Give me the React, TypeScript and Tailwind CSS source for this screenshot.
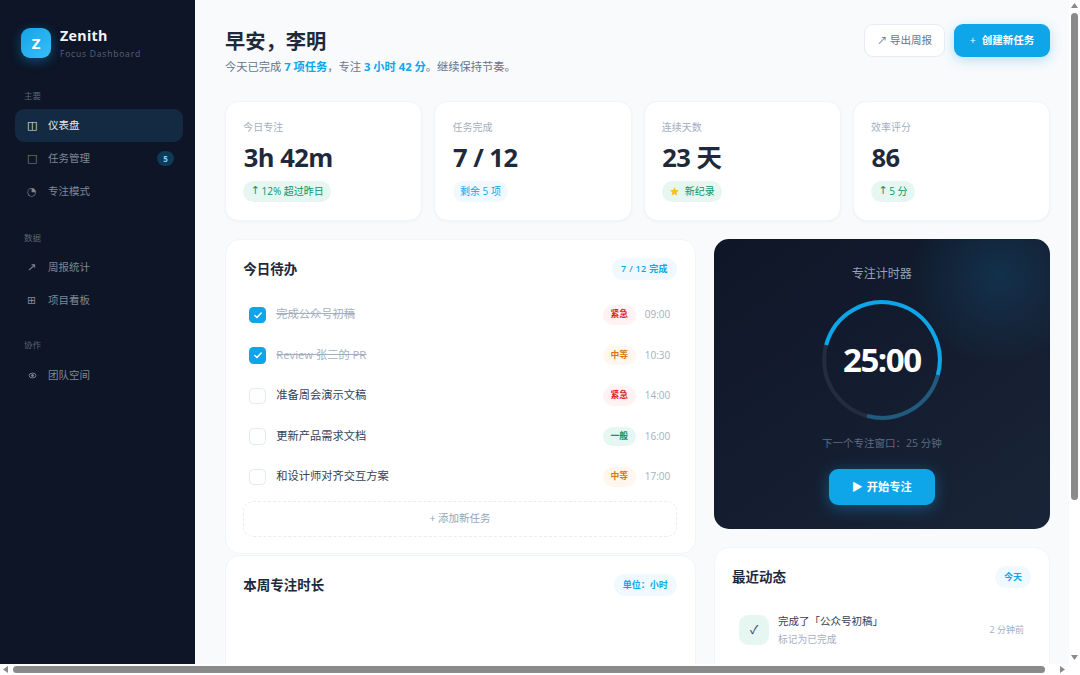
const stats = [
  { label: '今日专注', value: '3h 42m', chip: '12% 超过昨日', kind: 'up' },
  { label: '任务完成', value: '7 / 12', chip: '剩余 5 项', kind: 'info' },
  { label: '连续天数', value: '23 天', chip: '新纪录', kind: 'star' },
  { label: '效率评分', value: '86', chip: '5 分', kind: 'up' },
];

const tasks = [
  { title: '完成公众号初稿', level: '紧急', time: '09:00', done: true },
  { title: 'Review 张三的 PR', level: '中等', time: '10:30', done: true },
  { title: '准备周会演示文稿', level: '紧急', time: '14:00', done: false },
  { title: '更新产品需求文档', level: '一般', time: '16:00', done: false },
  { title: '和设计师对齐交互方案', level: '中等', time: '17:00', done: false },
];

const levelClass: Record<string, string> = {
  紧急: 'bg-[#fef2f2] text-[#dc2626]',
  中等: 'bg-[#fff7ed] text-[#d97706]',
  一般: 'bg-[#e6f7f1] text-[#059669]',
};

const dejavu = { fontFamily: '"DejaVu Sans", sans-serif' };

function SectionLabel({ children, className = '' }: { children: string; className?: string }) {
  return <div className={`px-[9px] text-[8.5px] leading-[12px] text-[#5b6474] ${className}`}>{children}</div>;
}

function NavItem({ icon, label, active, badge }: { icon: React.ReactNode; label: string; active?: boolean; badge?: string }) {
  return (
    <div className={`flex h-[33px] items-center rounded-[9px] pl-[12px] pr-[9px] text-[10.5px] ${active ? 'bg-[#132a42] text-[#e2e8f0]' : 'text-[#7f8896]'}`}>
      <span className="w-[21px] shrink-0 text-[11px] leading-none" style={dejavu}>{icon}</span>
      <span className="flex-1">{label}</span>
      {badge && (
        <span className="flex h-[15px] w-[17px] items-center justify-center rounded-full bg-[#0f3a57] text-[8px] font-bold text-[#7dd3fc]">{badge}</span>
      )}
    </div>
  );
}

function Sidebar() {
  return (
    <aside className="h-[664px] w-[195px] shrink-0 bg-[#0d1526] pl-[15px] pr-[12px]">
      <div className="flex items-center gap-[9px] px-[6px] pt-[27px]">
        <div className="flex h-[30px] w-[30px] items-center justify-center rounded-[9px] bg-gradient-to-br from-[#0ea5e9] to-[#38bdf8] text-[15px] font-bold text-white shadow-[0_3px_12px_rgba(14,165,233,0.4)]">Z</div>
        <div>
          <div className="text-[14.25px] font-bold leading-[17px] tracking-[0.3px] text-[#f1f5f9]">Zenith</div>
          <div className="mt-[5px] text-[8.5px] leading-[10px] tracking-[0.8px] text-[#5b6474]">Focus Dashboard</div>
        </div>
      </div>
      <SectionLabel className="mt-[31px] mb-[7px]">主要</SectionLabel>
      <NavItem active label="仪表盘" icon="◫" />
      <NavItem label="任务管理" badge="5" icon="□" />
      <NavItem label="专注模式" icon="◔" />
      <SectionLabel className="mt-[24px] mb-[7px]">数据</SectionLabel>
      <NavItem label="周报统计" icon="↗" />
      <NavItem label="项目看板" icon="⊞" />
      <SectionLabel className="mt-[22px] mb-[8px]">协作</SectionLabel>
      <NavItem
        label="团队空间"
        icon={
          <svg width="9" height="7" viewBox="0 0 9 7" fill="none" stroke="#7f8896" strokeWidth="0.9" className="ml-[0.5px]">
            <ellipse cx="4.5" cy="3.5" rx="3.4" ry="2.4" />
            <circle cx="4.5" cy="3.5" r="1" fill="#7f8896" />
          </svg>
        }
      />
    </aside>
  );
}

function StatCard({ label, value, chip, kind }: { label: string; value: string; chip: string; kind: string }) {
  const chipClass = kind === 'info' ? 'bg-[#f0f9ff] text-[#0ea5e9]' : 'bg-[#e6f7f1] text-[#059669]';
  return (
    <div className="h-[120px] rounded-[13.5px] border border-[#f1f5f9] bg-white px-[17.25px] pt-[18px] shadow-[0_1px_3px_rgba(15,23,42,0.04)]">
      <div className="text-[10px] leading-[14px] text-[#a3afc0]">{label}</div>
      <div className="mt-[6px] pl-[0.5px] text-[25.5px] font-bold leading-[34px] tracking-[-0.5px] text-[#1e293b]">{value}</div>
      <div className={`mt-[6.5px] inline-flex h-[21px] items-center gap-[1.5px] rounded-full px-[7.5px] text-[10px] ${chipClass}`}>
        {kind === 'up' && <span className="text-[11px]" style={dejavu}>↑</span>}
        {kind === 'star' && (
          <svg width="11" height="11" viewBox="0 0 24 24" fill="#fbbf24" className="mr-[3px]">
            <path d="M12 2.5l2.9 6.2 6.8.8-5 4.6 1.3 6.7-6-3.4-6 3.4 1.3-6.7-5-4.6 6.8-.8z" />
          </svg>
        )}
        {chip}
      </div>
    </div>
  );
}

function CardHead({ title, badge, wide }: { title: string; badge: string; wide?: boolean }) {
  return (
    <div className="flex h-[22px] items-center justify-between">
      <h2 className="text-[13.5px] font-bold text-[#1e293b]">{title}</h2>
      <span className={`flex h-[22px] items-center rounded-full bg-[#f0f9ff] px-[9px] text-[9px] font-semibold text-[#0ea5e9] ${wide ? 'tracking-[0.3px]' : ''}`}>{badge}</span>
    </div>
  );
}

function TaskRow({ title, level, time, done }: { title: string; level: string; time: string; done: boolean }) {
  return (
    <div className="flex h-[40.5px] items-center px-[6px]">
      <span className={`flex h-[16.5px] w-[16.5px] shrink-0 items-center justify-center rounded-[4.5px] ${done ? 'bg-[#0ea5e9]' : 'border border-[#e2e8f0] bg-white'}`}>
        {done && (
          <svg width="10" height="10" viewBox="0 0 10 10" fill="none" stroke="white" strokeWidth="1.4" strokeLinecap="round" strokeLinejoin="round">
            <path d="M1.8 5.4 4 7.4 8.2 2.9" />
          </svg>
        )}
      </span>
      <span className={`ml-[10.5px] flex-1 text-[11.25px] ${done ? 'text-[#a3afc0] line-through' : 'text-[#334155]'}`}>{title}</span>
      <span className={`flex h-[19.5px] w-[33px] items-center justify-center rounded-full text-[8.75px] font-semibold ${levelClass[level]}`}>{level}</span>
      <span className="ml-[9px] w-[26px] text-[10px] text-[#a3afc0]">{time}</span>
    </div>
  );
}

function TimerCard() {
  return (
    <div className="relative flex h-[290px] flex-col items-center overflow-hidden rounded-[15px] bg-[linear-gradient(145deg,#0e1627,#1a2438)] pt-[26px]">
      <div className="absolute right-[-38px] top-[-54px] h-[180px] w-[180px] rounded-full bg-[radial-gradient(circle,rgba(14,165,233,0.15)_0%,rgba(14,165,233,0)_70%)]" />
      <div className="text-[12px] leading-[18px] text-[#94a3b8]">专注计时器</div>
      <div className="relative mt-[17px] flex h-[120px] w-[120px] items-center justify-center">
        <svg width="120" height="120" viewBox="0 0 120 120" fill="none" strokeWidth="4" className="absolute left-0 top-0">
          <circle cx="60" cy="60" r="57.8" stroke="#232d40" />
          <circle cx="60" cy="60" r="57.8" stroke="#215a7f" pathLength={360} strokeDasharray="90 270" transform="rotate(15 60 60)" />
          <circle cx="60" cy="60" r="57.8" stroke="#0ea5e9" pathLength={360} strokeDasharray="180 180" transform="rotate(-165 60 60)" />
        </svg>
        <span className="relative text-[33px] font-bold tracking-[-1.4px] text-white">25:00</span>
      </div>
      <div className="mt-[15px] text-[10.5px] leading-[16px] text-[#5f6b80]">下一个专注窗口：25 分钟</div>
      <button className="mt-[18px] flex h-[36px] w-[106px] items-center justify-center gap-[4px] rounded-[9px] bg-[#0ea5e9] text-[11.25px] font-semibold text-white shadow-[0_3px_15px_rgba(14,165,233,0.4)]">
        <span className="text-[11px]">▶</span> 开始专注
      </button>
    </div>
  );
}

// the page's own scrollbars, which the screenshot shows but the headless browser hides
function Scrollbars() {
  return (
    <>
      <div className="absolute bottom-0 right-0 top-0 w-[11.25px] bg-white">
        <svg width="7" height="6" viewBox="0 0 7 6" fill="#8a8a8a" className="absolute left-[2.5px] top-[3px]"><path d="M3.5 0 7 5H0z" /></svg>
        <div className="absolute left-[2.25px] top-[12.5px] h-[487px] w-[6.75px] rounded-full bg-[#8a8a8a]" />
        <svg width="7" height="6" viewBox="0 0 7 6" fill="#8a8a8a" className="absolute left-[2.5px] top-[655px]"><path d="M0 0h7L3.5 5z" /></svg>
      </div>
      <div className="absolute bottom-0 left-0 right-0 h-[11.25px] bg-white">
        <svg width="6" height="7" viewBox="0 0 6 7" fill="#8a8a8a" className="absolute left-[3px] top-[2.5px]"><path d="M5 0v7L0 3.5z" /></svg>
        <div className="absolute left-[13px] top-[2.25px] h-[6.75px] w-[1032px] rounded-full bg-[#8a8a8a]" />
        <svg width="6" height="7" viewBox="0 0 6 7" fill="#8a8a8a" className="absolute left-[1060px] top-[2.5px]"><path d="M0 0v7l5-3.5z" /></svg>
      </div>
    </>
  );
}

export default function App() {
  return (
    <div
      style={{ fontFamily: '"Open Sans", "Noto Sans CJK SC", sans-serif' }}
      className="relative h-screen w-screen overflow-hidden bg-[#f8fafc]"
    >
      <div className="flex w-[1080px]">
        <Sidebar />
        <main className="flex-1 px-[30px] pt-[24px]">
          <header className="flex h-[47px] items-start justify-between">
            <div>
              <h1 className="text-[20.25px] font-bold leading-[34px] text-[#1e293b]">早安，李明</h1>
              <p className="text-[11.25px] leading-[17px] text-[#64748b]">
                今天已完成 <b className="text-[#0ea5e9]">7 项任务</b>，专注 <b className="text-[#0ea5e9]">3 小时 42 分</b>。继续保持节奏。
              </p>
            </div>
            <div className="flex gap-[9px]">
              <button className="flex h-[33px] w-[81px] items-center justify-center gap-[3px] rounded-[9px] border border-[#e8edf3] bg-white text-[10.5px] text-[#64748b]">↗ 导出周报</button>
              <button className="flex h-[33px] w-[96px] items-center justify-center gap-[6px] rounded-[9px] bg-[#0ea5e9] text-[10.5px] font-semibold text-white shadow-[0_3px_12px_rgba(14,165,233,0.3)]">
                <span className="font-normal">+</span>
                创建新任务
              </button>
            </div>
          </header>
          <section className="mt-[30px] grid grid-cols-4 gap-[12px]">
            {stats.map((s) => (
              <StatCard key={s.label} {...s} />
            ))}
          </section>
          <section className="mt-[18px] grid grid-cols-[1.4fr_1fr] gap-[18px]">
            <div className="flex flex-col gap-[1.5px]">
              <div className="h-[314.5px] rounded-[15px] border border-[#f1f5f9] bg-white pl-[17.25px] pr-[18px] pt-[18px]">
                <CardHead title="今日待办" badge="7 / 12 完成" wide />
                <div className="mt-[14.5px]">
                  {tasks.map((t) => (
                    <TaskRow key={t.time} {...t} />
                  ))}
                </div>
                <div className="mt-[4px] flex h-[36px] items-center justify-center rounded-[10px] border border-dashed border-[#e8edf3] text-[10.5px] text-[#94a3b8]">+ 添加新任务</div>
              </div>
              <div className="h-[290px] rounded-[15px] border border-[#f1f5f9] bg-white pl-[17.25px] pr-[18px] pt-[18px]">
                <CardHead title="本周专注时长" badge="单位：小时" />
              </div>
            </div>
            <div className="flex flex-col gap-[18px]">
              <TimerCard />
              <div className="h-[290px] rounded-[15px] border border-[#f1f5f9] bg-white pl-[17.25px] pr-[18px] pt-[18px]">
                <CardHead title="最近动态" badge="今天" />
                <div className="mt-[25px] flex items-center px-[7px]">
                  <div className="flex h-[30px] w-[30px] items-center justify-center rounded-[9px] bg-[#e6f7f1] text-[12px] text-[#334155]">✓</div>
                  <div className="ml-[9px] flex-1">
                    <div className="text-[10.5px] leading-[16px] text-[#334155]">完成了「公众号初稿」</div>
                    <div className="mt-[3px] text-[9.75px] leading-[15px] text-[#a3afc0]">标记为已完成</div>
                  </div>
                  <div className="text-[9px] text-[#a3afc0]">2 分钟前</div>
                </div>
              </div>
            </div>
          </section>
        </main>
      </div>
      <Scrollbars />
    </div>
  );
}
